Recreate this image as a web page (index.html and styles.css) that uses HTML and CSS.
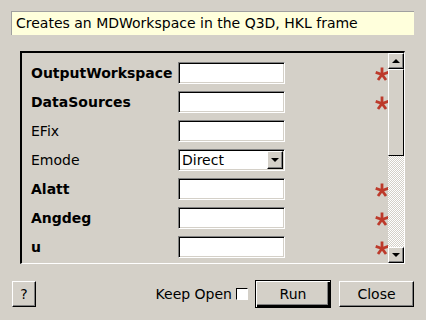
FILE: index.html
```
<!DOCTYPE html>
<html lang="en">
  <head>
    <meta charset="UTF-8">
    <title>ConvertToMD dialog</title>
    <link rel="stylesheet" href="styles.css">
  </head>
  <body>
    <div class="dialog">
      <div class="description">Creates an MDWorkspace in the Q3D, HKL frame</div>

      <div class="scroll-frame">
        <div class="props">
          <label class="prop-name required">OutputWorkspace</label>
          <span class="field"></span>
          <span></span>
          <svg class="star" viewBox="0 0 14 15"><use href="#asterisk"/></svg>

          <label class="prop-name required">DataSources</label>
          <span class="field"></span>
          <span></span>
          <svg class="star" viewBox="0 0 14 15"><use href="#asterisk"/></svg>

          <label class="prop-name">EFix</label>
          <span class="field"></span>
          <span></span>
          <span></span>

          <label class="prop-name">Emode</label>
          <span class="field combo">Direct<span class="combo-btn"><span class="arrow-down"></span></span></span>
          <span></span>
          <span></span>

          <label class="prop-name required">Alatt</label>
          <span class="field"></span>
          <span></span>
          <svg class="star" viewBox="0 0 14 15"><use href="#asterisk"/></svg>

          <label class="prop-name required">Angdeg</label>
          <span class="field"></span>
          <span></span>
          <svg class="star" viewBox="0 0 14 15"><use href="#asterisk"/></svg>

          <label class="prop-name required">u</label>
          <span class="field"></span>
          <span></span>
          <svg class="star" viewBox="0 0 14 15"><use href="#asterisk"/></svg>
        </div>

        <div class="scrollbar">
          <div class="sb-btn"><span class="arrow-up"></span></div>
          <div class="sb-thumb"></div>
          <div class="sb-trough"></div>
          <div class="sb-btn"><span class="arrow-down"></span></div>
        </div>
      </div>

      <div class="button-row">
        <button class="btn btn-help">?</button>
        <span class="spacer"></span>
        <label class="keep-open">Keep Open</label>
        <span class="checkbox"></span>
        <button class="btn btn-default">Run</button>
        <button class="btn btn-close">Close</button>
      </div>
    </div>

    <svg width="0" height="0" class="defs">
      <defs>
        <g id="asterisk" stroke="#bd3a2b" stroke-width="2.8" stroke-linecap="butt">
          <line x1="7" y1="8.5" x2="7" y2="1.5"/>
          <line x1="7" y1="8.5" x2="13.3" y2="6.4"/>
          <line x1="7" y1="8.5" x2="11" y2="14"/>
          <line x1="7" y1="8.5" x2="3" y2="14"/>
          <line x1="7" y1="8.5" x2="0.7" y2="6.4"/>
        </g>
      </defs>
    </svg>
  </body>
</html>
```

FILE: styles.css
```
body {
  margin: 0;
  background: #d4d0c8;
  font-family: "DejaVu Sans", sans-serif;
  font-size: 14px;
  color: #000;
}

.dialog {
  width: 426px;
  height: 320px;
  padding: 11px 12px 0 11px;
  box-sizing: border-box;
}

.description {
  height: 24px;
  line-height: 23px;
  padding-left: 4px;
  background: #ffffdc;
  border-top: 1px solid #a0a0a0;
  border-left: 1px solid #a0a0a0;
  box-sizing: border-box;
  white-space: nowrap;
}

.scroll-frame {
  display: flex;
  width: 385px;
  height: 213px;
  margin: 16px 0 0 9px;
  border-top: 2px solid #000;
  border-left: 2px solid #000;
  border-right: 1px solid #fff;
  border-bottom: 1px solid #fff;
  box-sizing: border-box;
  overflow: hidden;
}

.props {
  flex: 1;
  display: grid;
  grid-template-columns: 147px 107px 1fr 13px;
  grid-auto-rows: 22px;
  row-gap: 7px;
  align-items: center;
  padding: 9px 0 0 9px;
}

.prop-name {
  white-space: nowrap;
}

.prop-name.required {
  font-weight: bold;
}

.field {
  height: 22px;
  background: #fff;
  border: 1px solid;
  border-color: #808080 #fff #fff #808080;
  box-shadow: inset 1px 1px #000, inset -1px -1px #d4d0c8;
  box-sizing: border-box;
}

.combo {
  display: flex;
  align-items: center;
  justify-content: space-between;
  padding: 0 1px 0 3px;
}

.combo-btn {
  display: flex;
  align-items: center;
  justify-content: center;
  width: 16px;
  height: 18px;
  background: #d4d0c8;
  border-top: 1px solid #fff;
  border-left: 1px solid #fff;
  border-right: 1px solid #000;
  border-bottom: 1px solid #000;
  box-shadow: inset -1px -1px #808080;
  box-sizing: border-box;
}

.star {
  width: 14px;
  height: 15px;
  margin-left: 0;
}

.scrollbar {
  display: flex;
  flex-direction: column;
  width: 16px;
}

.sb-btn {
  display: flex;
  align-items: center;
  justify-content: center;
  height: 16px;
  background: #d4d0c8;
  border-top: 1px solid #fff;
  border-left: 1px solid #fff;
  border-right: 1px solid #000;
  border-bottom: 1px solid #000;
  box-shadow: inset -1px -1px #808080;
  box-sizing: border-box;
}

.sb-thumb {
  height: 87px;
  background: #d4d0c8;
  border-left: 1px solid #fff;
  border-top: 1px solid #fff;
  border-right: 1px solid #000;
  border-bottom: 1px solid #000;
  box-sizing: border-box;
}

.sb-trough {
  flex: 1;
  background-color: #fff;
  background-image: conic-gradient(#d4d0c8 25%, #fff 0 50%, #d4d0c8 0 75%, #fff 0);
  background-size: 2px 2px;
}

.arrow-up,
.arrow-down {
  width: 0;
  height: 0;
  border-left: 4px solid transparent;
  border-right: 4px solid transparent;
}

.arrow-up {
  border-bottom: 4px solid #000;
}

.arrow-down {
  border-top: 4px solid #000;
}

.button-row {
  display: flex;
  align-items: center;
  height: 28px;
  margin-top: 16px;
}

.spacer {
  flex: 1;
}

.btn {
  font: inherit;
  color: #000;
  height: 26px;
  padding: 0;
  background: #d4d0c8;
  border-top: 1px solid #fff;
  border-left: 1px solid #fff;
  border-right: 1px solid #000;
  border-bottom: 1px solid #000;
  box-shadow: inset -1px -1px #808080;
  box-sizing: border-box;
}

.btn-help {
  width: 24px;
  margin-left: 1px;
}

.btn-default {
  width: 76px;
  height: 28px;
  margin-left: 7px;
  outline: none;
  border: 1px solid #000;
  box-shadow: inset 1px 1px #fff, inset -2px -2px #000, inset -3px -3px #808080;
}

.btn-close {
  width: 75px;
  margin-left: 8px;
}

.keep-open {
  margin-right: 4px;
}

.checkbox {
  width: 12px;
  height: 12px;
  background: #fff;
  border-top: 1px solid #000;
  border-left: 1px solid #000;
  border-right: 1px solid #fff;
  border-bottom: 1px solid #fff;
  box-sizing: border-box;
}

.defs {
  position: absolute;
}
```
